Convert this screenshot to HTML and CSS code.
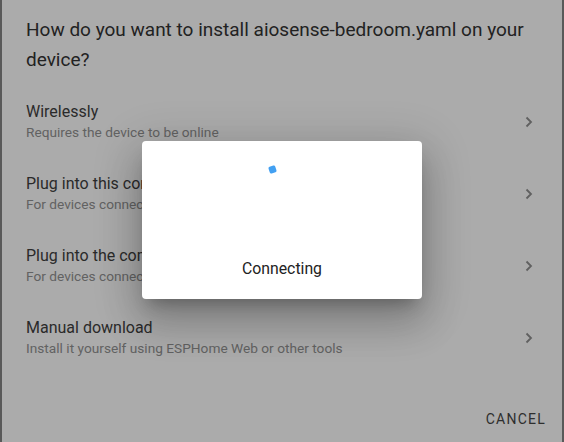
FILE: index.html
```html
<!DOCTYPE html>
<html>
<head>
<meta charset="utf-8">
<link rel="stylesheet" href="styles.css">
</head>
<body>
<div class="dialog">
  <h2 class="title">How do you want to install aiosense-bedroom.yaml on your device?</h2>
  <ul class="list">
    <li class="item">
      <div class="texts"><span class="primary">Wirelessly</span><span class="secondary">Requires the device to be online</span></div>
      <svg class="chev" width="8" height="12" viewBox="0 0 8 12"><path d="M1.5 1.5 L6 6 L1.5 10.5" fill="none" stroke="currentColor" stroke-width="1.8"/></svg>
    </li>
    <li class="item">
      <div class="texts"><span class="primary">Plug into this computer</span><span class="secondary">For devices connected via USB to this computer</span></div>
      <svg class="chev" width="8" height="12" viewBox="0 0 8 12"><path d="M1.5 1.5 L6 6 L1.5 10.5" fill="none" stroke="currentColor" stroke-width="1.8"/></svg>
    </li>
    <li class="item">
      <div class="texts"><span class="primary">Plug into the computer running ESPHome</span><span class="secondary">For devices connected via USB to the server</span></div>
      <svg class="chev" width="8" height="12" viewBox="0 0 8 12"><path d="M1.5 1.5 L6 6 L1.5 10.5" fill="none" stroke="currentColor" stroke-width="1.8"/></svg>
    </li>
    <li class="item">
      <div class="texts"><span class="primary">Manual download</span><span class="secondary">Install it yourself using ESPHome Web or other tools</span></div>
      <svg class="chev" width="8" height="12" viewBox="0 0 8 12"><path d="M1.5 1.5 L6 6 L1.5 10.5" fill="none" stroke="currentColor" stroke-width="1.8"/></svg>
    </li>
  </ul>
  <div class="actions"><span class="btn">CANCEL</span></div>
</div>
<div class="modal">
  <div class="spinner">
    <svg width="48" height="48" viewBox="0 0 48 48"><rect x="11" y="6" width="7" height="7" rx="1.5" transform="rotate(-18 14.5 9.5)" fill="#42a0f2"/></svg>
  </div>
  <div class="msg">Connecting</div>
</div>
</body>
</html>
```

FILE: styles.css
```css
html, body {
  margin: 0;
  padding: 0;
  width: 564px;
  height: 442px;
  overflow: hidden;
  background: #595959;
  font-family: Roboto, "Liberation Sans", sans-serif;
}
.dialog {
  margin: 0 2px;
  height: 442px;
  background: #ababab;
  box-sizing: border-box;
  display: flex;
  flex-direction: column;
}
.title {
  margin: 0;
  padding: 15px 4px 0 24px;
  font-size: 19px;
  font-weight: 400;
  line-height: 30px;
  color: #222;
}
.list {
  list-style: none;
  margin: 9px 0 0 0;
  padding: 0;
}
.item {
  height: 72px;
  display: flex;
  align-items: flex-start;
  padding: 0 29px 0 24px;
}
.texts {
  flex: 1;
  display: flex;
  flex-direction: column;
  padding-top: 18px;
}
.primary {
  font-size: 16px;
  line-height: 20px;
  color: #2a2a2a;
}
.secondary {
  font-size: 13.7px;
  line-height: 20px;
  color: #626262;
}
.chev {
  color: #606060;
  display: block;
  align-self: center;
  margin-top: 3px;
}
.actions {
  margin-top: auto;
  display: flex;
  justify-content: flex-end;
  padding: 0 16px 12px 0;
}
.btn {
  font-size: 14px;
  letter-spacing: 1.25px;
  color: #2e2e2e;
  line-height: 22px;
}
.modal {
  position: absolute;
  left: 142px;
  top: 141px;
  width: 280px;
  height: 158px;
  background: #fff;
  border-radius: 4px;
  box-shadow: 0 11px 15px -7px rgba(0,0,0,.25), 0 24px 38px 3px rgba(0,0,0,.16), 0 9px 46px 8px rgba(0,0,0,.14);
  display: flex;
  flex-direction: column;
  align-items: center;
}
.spinner {
  margin-top: 19px;
  width: 48px;
  height: 48px;
}
.spinner svg { display: block; }
.msg {
  margin-top: 51px;
  font-size: 15.8px;
  line-height: 20px;
  color: #222;
}
```
